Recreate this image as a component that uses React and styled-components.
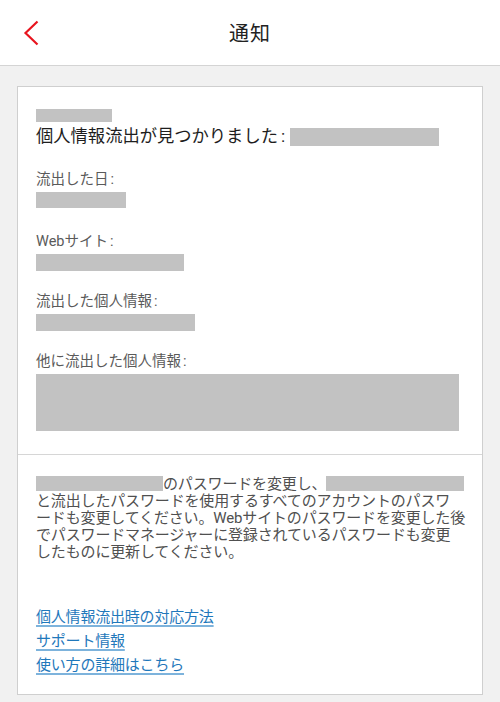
import React from "react";
import styled, { createGlobalStyle } from "styled-components";

const Global = createGlobalStyle`
  html, body { margin: 0; padding: 0; background: #f1f1f1; }
  body { font-family: Roboto, "Noto Sans CJK JP", sans-serif; -webkit-font-smoothing: antialiased; }
`;

const Header = styled.header`
  height: 65px;
  background: #fff;
  border-bottom: 1px solid #d4d4d4;
  display: grid;
  grid-template-columns: 1fr auto 1fr;
  align-items: center;
`;

const BackButton = styled.button`
  justify-self: start;
  margin-left: 20px;
  width: 22px;
  height: 30px;
  padding: 0;
  border: 0;
  background: none;
  display: flex;
  align-items: center;
  justify-content: center;
`;

const Title = styled.h1`
  margin: 0;
  font-size: 20px;
  font-weight: 400;
  color: #222;
  letter-spacing: 1px;
`;

const Main = styled.main`
  padding: 20px 17px 6px;
`;

const Card = styled.section`
  background: #fff;
  border: 1px solid #cfcfcf;
`;

const Block = styled.div`
  padding: ${(p) => p.$pad};
  & + & { border-top: 1px solid #d6d6d6; }
`;

const Redact = styled.span`
  display: ${(p) => (p.$inline ? "inline-block" : "block")};
  width: ${(p) => p.$w}px;
  height: ${(p) => p.$h}px;
  background: #c2c2c2;
  margin-top: ${(p) => p.$mt || 0}px;
  vertical-align: ${(p) => p.$va || "baseline"};
`;

const Heading = styled.h2`
  margin: 2px 0 0;
  font-size: 17.3px;
  line-height: 24px;
  font-weight: 400;
  color: #1e1e1e;
  display: flex;
  align-items: center;
`;

const Colon = styled.span`
  margin-left: ${(p) => p.$gap}px;
  margin-right: ${(p) => p.$after || 0}px;
`;

const Field = styled.div`
  margin-top: ${(p) => p.$mt}px;
`;

const Label = styled.div`
  font-size: 14.5px;
  line-height: 20px;
  color: #5a5a5a;
`;

const Paragraph = styled.p`
  margin: 0;
  font-size: 15px;
  letter-spacing: -0.15px;
  line-height: 17px;
  color: #505050;
  white-space: nowrap;
`;

const Links = styled.nav`
  margin-top: 44px;
  display: flex;
  flex-direction: column;
  align-items: flex-start;
`;

const Link = styled.a`
  font-size: 15px;
  letter-spacing: -0.2px;
  line-height: 24px;
  color: #1f78bb;
  text-decoration: underline;
  text-decoration-color: #7db3dc;
  text-decoration-thickness: 2px;
  text-underline-offset: 3px;
`;

const fields = [
  { label: "流出した日", w: 90, h: 16, mt: 22 },
  { label: "Webサイト", w: 148, h: 17, mt: 24 },
  { label: "流出した個人情報", w: 159, h: 17, mt: 21 },
  { label: "他に流出した個人情報", w: 423, h: 57, mt: 21 },
];

export default function App() {
  return (
    <>
      <Global />
      <Header>
        <BackButton aria-label="戻る">
          <svg width="16" height="26" viewBox="0 0 16 26">
            <path d="M14.5 1.5 L2.5 13 L14.5 24.5" fill="none" stroke="#e8141e" strokeWidth="2.2" />
          </svg>
        </BackButton>
        <Title>通知</Title>
        <span />
      </Header>
      <Main>
        <Card>
          <Block $pad="22px 18px 23px">
            <Redact $w={76} $h={13} />
            <Heading>
              個人情報流出が見つかりました<Colon $gap={3} $after={5}>:</Colon>
              <Redact $inline $w={149} $h={18} $mt={2} />
            </Heading>
            {fields.map((f) => (
              <Field key={f.label} $mt={f.mt}>
                <Label>
                  {f.label}
                  <Colon $gap={2}>:</Colon>
                </Label>
                <Redact $w={f.w} $h={f.h} $mt={2} />
              </Field>
            ))}
          </Block>
          <Block $pad="21px 18px 17px">
            <Paragraph>
              <Redact $inline $w={127} $h={15} $va="-2px" />
              のパスワードを変更し、
              <Redact $inline $w={138} $h={15} $va="-2px" />
              <br />
              と流出したパスワードを使用するすべてのアカウントのパスワ
              <br />
              ードも変更してください。Webサイトのパスワードを変更した後
              <br />
              でパスワードマネージャーに登録されているパスワードも変更
              <br />
              したものに更新してください。
            </Paragraph>
            <Links>
              <Link href="#">個人情報流出時の対応方法</Link>
              <Link href="#">サポート情報</Link>
              <Link href="#">使い方の詳細はこちら</Link>
            </Links>
          </Block>
        </Card>
      </Main>
    </>
  );
}
